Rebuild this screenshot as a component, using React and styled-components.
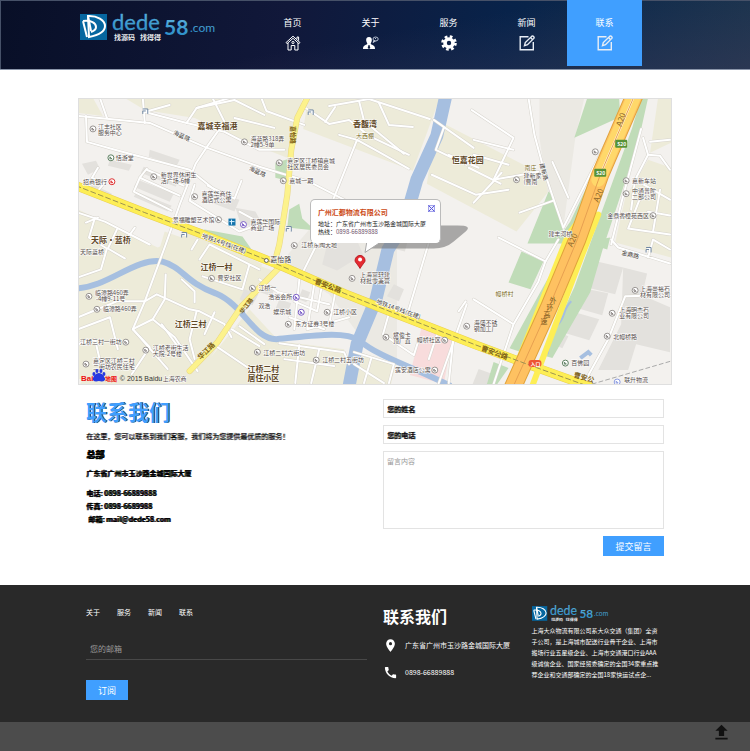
import React from "react";
import styled, { createGlobalStyle } from "styled-components";
import { MdLocationOn, MdCall, MdFileUpload } from "react-icons/md";

const navItems = [
  { name: "首页", icon: "home" },
  { name: "关于", icon: "person" },
  { name: "服务", icon: "gear" },
  { name: "新闻", icon: "edit" },
  { name: "联系", icon: "edit", active: true },
];

const footerLinks = ["关于", "服务", "新闻", "联系"];

const NavIcon = ({ type }) => {
  if (type === "edit") {
    return (
      <svg width="16" height="16" viewBox="0 0 16 16" fill="none" stroke="#e8eef6" strokeWidth="1.4">
        <path d="M9.500 1.700H1.200v13.100h13.100V7" />
        <path d="m5.500 10.700.8-3.200 6.500-6.300q1-.6 1.800.3.900.9.200 1.900l-6.300 6.300z" />
        <path d="m11.500 2.500 2 2" />
      </svg>
    );
  }
  if (type === "home") {
    return (
      <svg width="16" height="16" viewBox="0 0 16 16" fill="none" stroke="#fff">
        <path d="M1 7.6 8 1.2l7 6.4-1 1.1-6-5.4-6 5.4z" />
        <path d="M3 8v7h3.2v-4.5h3.6V15H13V8M12 4V2h1.6v3.6" />
        <circle cx="8" cy="7.5" r="1.1" />
      </svg>
    );
  }
  if (type === "person") {
    return (
      <svg width="16" height="16" viewBox="0 0 16 16" fill="#fff">
        <path d="M6 2c2.2 0 3 1.5 2.8 3.4C8.600 7 8 7.600 7.700 8.300c0 1 1 1.400 2.300 2 1.700.8 2 1.700 2 3.700H0c0-2 .4-2.900 2-3.700 1.400-.6 2.300-1 2.300-2C4 7.600 3.400 7 3.200 5.400 3 3.500 3.800 2 6 2z" />
        <path d="M5.500 10h1l.8 3-1.300 1-1.300-1z" fill="#101d3b" />
        <ellipse cx="12.600" cy="4" rx="2.600" ry="2" fill="none" stroke="#b6bfd0" />
        <path d="m11 5.500-1 2 2.500-1.500M12 4l1-1" stroke="#b6bfd0" />
      </svg>
    );
  }
  return (
    <svg width="16" height="16" viewBox="0 0 16 16" fill="none" stroke="#fff">
      <circle cx="8" cy="8" r="4" strokeWidth="3.600" />
      <circle cx="8" cy="8" r="6.500" strokeWidth="2.600" strokeDasharray="2.700 2.405" />
    </svg>
  );
};

const Logo = () => (
  <LogoSvg viewBox="0 0 140 30" role="img" aria-label="dede58.com">
    <defs>
      <linearGradient id="logoBlue" x1="0" y1="0" x2="0" y2="1">
        <stop offset="0" stopColor="#64b8e2" />
        <stop offset="1" stopColor="#2388c4" />
      </linearGradient>
    </defs>
    <rect y="2" width="27" height="26" fill="#06669f" />
    <g fill="none" stroke="#fff" strokeWidth="2">
      <path d="M8 4c9-.5 17 4 17 10 0 5-6 9-16 11z" />
      <path d="m3 9 4 16M3 9c8-1 13 2 13 6 0 2.500-2 4-5 5" />
      <path d="M8 4 11 19" />
    </g>
    <g fill="url(#logoBlue)">
      <text x="32" y="18" fontSize="22" fontFamily="Lato" stroke="#4aa3d6" strokeWidth="0.3">dede</text>
      <text x="84" y="23" fontSize="21" fontFamily="Lato" fontWeight="bold">58</text>
      <text x="110" y="20" fontSize="12" fontFamily="Lato">.com</text>
    </g>
    <g fill="#e8e8ec" fontSize="7" fontWeight="bold">
      <text x="34" y="28">找源码</text>
      <text x="60" y="28">找得得</text>
    </g>
  </LogoSvg>
);

// white streets, drawn once as a casing and once as the surface
const streets = [
  "M78 116 L150 123 L205 147 L260 167 L310 182 L345 200",
  "M86 116 L87 142 L115 150 L190 170 L215 190",
  "M100 98 L107 118 M143 98 L145 123 M145 112 L187 123 L197 108 L230 98",
  "M145 112 L170 105 M187 123 L225 132 L260 150 L285 150",
  "M213 98 L225 122 L208 146 L196 164 L180 205 L166 245 L145 302 L133 330",
  "M197 108 L235 100 L265 115 M235 118 L275 128 M262 98 L267 111 L305 125",
  "M140 178 L134 192 L172 211 M140 178 L180 196 M147 170 L184 186",
  "M140 178 L147 169 M195 185 L190 201 L240 232 L262 224 L240 212",
  "M98 168 L92 178 L104 184 L98 191 M208 186 L235 199 L242 181",
  "M95 218 L89 238 L107 249 L101 270 L78 278 M78 213 L105 222 L150 245",
  "M117 230 L108 249 L125 259 M125 242 L135 228 M86 223 L98 218",
  "M305 107 L330 124 L350 120 L370 136 L410 155 M330 106 L370 99 L431 119",
  "M326 122 L336 107 M360 101 L365 121 L405 154 M380 103 L390 125 L414 127",
  "M340 135 L358 140 L378 151 L410 169 M358 140 L332 205",
  "M435 120 L475 148 M445 128 L437 150 L468 165 M450 155 L480 168",
  "M433 175 L477 195 L510 190 M473 110 L515 138 L495 180 L540 172",
  "M475 140 L515 150 M475 155 L510 165 M470 168 L502 184",
  "M530 98 L536 135 L546 172 L557 205 L565 228 M475 203 L503 173",
  "M554 162 L570 198 M521 213 L555 201 M565 228 L617 125 L628 122",
  "M643 129 L624 200 L613 245 M645 138 L650 155 L637 180 L633 210",
  "M650 155 L662 156 L672 170 M652 142 L672 140 M637 180 L672 200",
  "M643 196 L630 229 L672 235 M650 212 L672 216 M662 190 L655 232",
  "M613 240 L620 248 L672 264 M650 258 L655 240 L672 250",
  "M500 238 L547 262 L540 282 L515 325 L475 300 M515 325 L495 385",
  "M547 262 L560 240 M672 296 L627 297 L610 340 L588 380",
  "M78 318 L100 309 L117 302 L145 302 L157 295 L190 310 L200 312 L225 325 L232 338",
  "M166 275 L165 300 L153 320 L175 338 L198 372 M182 280 L195 292 L195 303",
  "M78 330 L110 318 L118 350 M78 345 L95 340 L102 370 M133 330 L150 348 L132 375",
  "M133 330 L168 370 M153 320 L133 330 M162 325 L180 350 M197 312 L190 340 L195 360",
  "M200 260 L210 245 L260 270 M192 250 L198 240 M203 277 L243 290 L250 265",
  "M215 313 L205 335 M232 330 L260 347 M240 327 L265 345 M218 348 L258 375",
  "M260 280 L279 293 L330 305 M300 281 L295 330 M315 285 L308 330 L350 318",
  "M322 290 L318 312 L295 302 M336 294 L330 325 M290 318 L325 330",
  "M280 344 L345 353 L350 365 M300 346 L296 384 M320 350 L312 384 M285 360 L335 367",
  "M355 353 L395 365 L390 384 M355 365 L385 384 M372 360 L365 384",
  "M390 314 L384 335 L415 356 L420 340 M440 330 L430 360 M455 335 L450 384",
  "M460 312 L467 302 M468 305 L440 384 M430 243 L410 310 M320 240 L300 280",
];

const blocks = [
  "M138 180l36 14-4 8-36-15zM144 167l35 14-3 6-35-14zM137 192l35 14-4 6-34-15z",
  "M210 190l30 10-5 12-28-11zM236 208l20 4 10 18-25-6zM150 150l30 10-3 6-28-9z",
  "M92 184l20 10-3 8-20-9zM82 164l14-3 4 8-12 6zM110 160l22 5-3 6-21-5z",
  "M262 282l14 6-4 9-14-5zM280 300l12 4-4 10-12-4zM303 290l8 3-4 10-8-3z",
  "M245 290l14 5-6 11-13-6zM328 245l30-4 6 14-26 16-15-6z",
  "M590 260l35 8-8 27-38-9zM625 268l24 6-5 22 28 12v45l-34-8-8 26h-30l23-46z",
  "M580 288l30 6-6 22-32-9zM573 312l28 8-10 21-27-8zM560 333l10 4-6 12-9-4z",
  "M398 235l12 2-4 15-12-3zM395 285l10 5-5 12-12-5zM480 370l14 5v10h-20z",
];

// [x, y, text, size]
const places = [
  [98, 129, "江丰社区", 6], [98, 135, "服务中心", 6],
  [251, 141, "海蓝路318弄", 6], [251, 147, "2幢5-9单", 6],
  [116, 160, "恬游堂", 6], [83, 184, "招商银行", 6],
  [161, 177, "新世界休闲生", 6], [161, 183, "活广场-6幢", 6],
  [202, 196, "嘉莲华商住", 6], [202, 202, "酒店式公寓", 6],
  [173, 222, "景福雕塑艺术馆", 6], [251, 224, "嘉莲华国际", 6], [251, 230, "商业广场", 6],
  [288, 163, "嘉定区江桥镇嘉城", 6], [288, 169, "社区居民委员会", 6],
  [290, 183, "嘉城一期", 6], [302, 248, "江桥东陶天地", 6],
  [525, 178, "建新家", 6], [525, 184, "(曹南", 6],
  [634, 183, "嘉新车站", 6], [634, 193, "中通普陀", 6], [634, 199, "二部公司", 6],
  [609, 218, "金鼎香樟苑西区", 6], [550, 236, "建丰河桥", 6],
  [80, 255, "天际蓝桥", 6], [218, 281, "曹安社区", 6],
  [95, 296, "临潭路460弄", 6], [96, 302, "-4幢9-11号", 6], [103, 312, "临潭路460弄", 6],
  [80, 345, "江桥三村一街坊", 6], [153, 351, "江桥老街生活", 6], [153, 357, "大院-2号楼", 6],
  [93, 364, "嘉定区江桥三村", 6], [93, 370, "二街坊农民住宅", 6],
  [259, 291, "江桥一", 6], [269, 300, "浩浴会所", 6], [259, 309, "双浩", 6],
  [274, 315, "娱乐城", 6], [334, 315, "江桥小区", 6], [296, 327, "东方证券3号楼", 6],
  [264, 356, "江桥二村六街坊", 6], [323, 363, "江桥二村五街坊", 6],
  [361, 278, "上海富轩建", 6], [361, 284, "材批零兼营", 6],
  [394, 338, "斌俊卡", 6], [394, 344, "顶厂直", 6], [418, 343, "幔桥社区", 6],
  [396, 373, "莲安酒店公寓", 6], [475, 326, "海盛不锈", 6], [475, 332, "钢加工厂", 6],
  [642, 292, "上海豪裕石", 6], [642, 298, "材有限公司", 6],
  [621, 313, "上海明杰石", 6], [621, 319, "业有限公司", 6],
  [615, 340, "北幔桥路", 6], [573, 366, "百佛园", 6], [626, 383, "联升物流", 6],
  [163, 382, "上海农商", 6],
];

const areas = [
  [198, 129, "嘉城幸福港", 8], [354, 127, "香馥湾", 8], [453, 163, "恒嘉花园", 8],
  [91, 243, "天际·蓝桥", 8], [201, 271, "江桥一村", 8], [175, 328, "江桥三村", 8],
  [248, 373, "江桥二村", 8], [248, 382, "居住小区", 8],
];

const roadNames = [
  [173, 134, "海蓝路", 6, 25], [249, 170, "海蓝路", 6, 25],
  [202, 238, "地铁14号线(在建)", 6, 20], [271, 263, "嘉怡路", 7, 0],
  [377, 304, "地铁14号线(在建)", 6, 20],
  [541, 164, "建新路", 6, 75], [623, 255, "金鼎路", 6, 14],
];

const mainRoadNames = [
  [292, 126, "嘉怡路", 6, 90], [315, 284, "曹安公路", 7, 21],
  [243, 315, "华江路", 6, -52], [201, 361, "华江路", 7, -45],
  [482, 351, "曹安公路", 7, 20], [575, 378, "曹安公", 7, 16],
];

const markers = [
  [93, 129], [245, 142], [111, 158, "#5d8061"], [112, 182, "#d33"], [154, 177],
  [195, 197], [219, 220], [244, 225, "#7659c5"], [280, 163], [284, 181],
  [295, 246], [518, 180], [597, 152], [628, 181], [628, 194], [655, 216],
  [212, 279], [89, 297], [97, 310], [126, 343], [146, 351], [86, 365],
  [253, 289], [297, 298, "#7659c5"], [302, 313, "#7659c5"], [328, 313],
  [289, 325], [258, 353], [317, 361], [353, 279], [387, 338], [446, 341], [436, 371],
  [468, 327], [637, 291], [614, 314], [609, 337], [567, 364, "#5d8061"], [619, 383, "#8c9be0"],
];

const river =
  "M76 289 C108 288 135 258 162 262 C184 268 184 282 216 294 C245 306 254 340 277 340 C310 337 345 331 360 341 C380 358 410 366 452 387";
const mainRoad = "M76 186 L145 213 L201 234 L276 264 L345 294 L398 315 L475 345 L531 366 L595 389";
const highway = "M637 94 L602 175 L579 240 L551 307 L514 389";

const MapDrawing = () => (
  <MapSvg viewBox="79 99 594 286" aria-label="公司位置地图">
    <rect x="79" y="99" width="594" height="286" fill="#f3f1ee" />
    <g fill="#edebd9">
      <path d="M78 98h15l10 18-25-3zM125 98h178l-10 62-36-14-62-28-50-8z" />
      <path d="M78 210l80 38 40-18 65 35-80 115H78z" />
      <path d="M165 232l90 32 20 8-30 32-50 81H80l75-120zM190 385l60-75 30 32 65 8 5 35z" />
      <path d="M309 98h132l-27 73-110-42zM438 120l120 62-40 50-90-48z" />
      <path d="M660 98h13v45l-21 10zM650 160l23 8v90l-56-15 10-45zM352 350l45 15-5 20h-45z" />
    </g>
    <path d="M541 98h45l-9 40-12 90-15-30-9-60zM310 230l88 15v120l-35-25-33-45-50-30z" fill="#ebe9e3" />
    <g fill="#e3e1dd">
      {blocks.map((d) => (
        <path d={d} key={d} />
      ))}
    </g>
    <g fill="#c0dcb8">
      <path d="M589 98h32l1 19-46 21zM643 98h7l-10 45-35 105-13 45-38 66-10-3 32-68 58-160z" />
      <path d="M617 127l-45 95-7 10-12-38-3-2-21 52h40l-25 45-33 60 12 4 50-110 30-65zM523 252l22 10-13 28-22-7z" />
      <path d="M495 363l15 6-12 17h-10zM290 210l10-6 3 15 13 12-28-3zM276 163l14-4-2 22-12-3z" />
      <path d="M205 230l38 7 12 17-16-4-40-15zM600 240l12-2-3 12-16-5z" />
    </g>
    <path d="M424 323l30 12-9 50-34-9z" fill="#f8dcdc" />
    <g fill="none" stroke="#a6bfe0">
      <path d={river} strokeWidth="6" />
      <path d="M447 96 L438 136 L418 180 L405 225 L389 250 L377 300 L358 345 L350 387" strokeWidth="13" />
      <path d="M573 302 C564 310 568 318 558 327 C550 333 552 346 549 355" strokeWidth="2" />
      <path d="M582 359l8-6 3 3" strokeWidth="4" />
    </g>
    <g fill="none" strokeLinejoin="round" strokeLinecap="round">
      <g stroke="#d7d4cd" strokeWidth="3">
        {streets.map((d) => (
          <path d={d} key={d} />
        ))}
      </g>
      <g stroke="#fff" strokeWidth="2">
        {streets.map((d) => (
          <path d={d} key={d} />
        ))}
      </g>
      {[["#e8d684", 6], ["#fcf28c", 5]].map(([color, width]) => (
        <g stroke={color} strokeWidth={width} key={color}>
          <path d="M309 96 L298 118 L292 150 L288 195 L280 245 L275 264" />
          <path d="M279 269 L242 307 L218 343 L190 372" />
        </g>
      ))}
      <path d={mainRoad} stroke="#e9cf4f" strokeWidth="9" />
      <path d={mainRoad} stroke="#fdee55" strokeWidth="8" />
      <path d="M597 200 L570 235 L509 389 M600 215 L584 255 L533 389" stroke="#fdee55" strokeWidth="6" />
      <path d={highway} stroke="#e0a33b" strokeWidth="18" />
      <path d={highway} stroke="#fec161" strokeWidth="16" />
      <path d="M637 94 L600 180" stroke="#ffd86a" strokeWidth="14" />
      <path d="M637 94 L602 175" stroke="#fff5dd" strokeWidth="2" />
      <path d={highway} stroke="#e7a050" strokeWidth="1" />
      <path d={mainRoad} stroke="#9c9250" strokeWidth="1" strokeDasharray="5 3" />
      <path d="M594 385 L673 362" stroke="#aaa" strokeDasharray="4 3" />
    </g>
    {markers.map(([x, y, color]) => (
      <g key={`${x}-${y}`}>
        <circle cx={x} cy={y} r="3" fill="#fff" stroke={color || "#989491"} />
        <path d={`M${x - 1} ${y + 1}v-2l2 2h-2`} stroke={color || "#857e7c"} fill="none" />
      </g>
    ))}
    <g fill="#fff" stroke="#6f87a2">
      {[[143, 109], [309, 110], [182, 233], [287, 227], [648, 248]].map(([x, y]) => (
        <path d={`M${x} ${y}h5v5m-5 0v-3h3`} key={x} />
      ))}
    </g>
    <rect x="229" y="219" width="7" height="7" fill="#1676ae" />
    <path d="M230 222h5M232 220v5" stroke="#d9f1ff" />
    <g stroke="#fff" strokeWidth="1" paintOrder="stroke">
      <g fill="#544b48">
        {places.map(([x, y, text, size]) => (
          <text x={x} y={y} fontSize={size} key={`${x}-${y}`}>{text}</text>
        ))}
      </g>
      <g fill="#5f4827" fontWeight="bold">
        {areas.map(([x, y, text, size]) => (
          <text x={x} y={y} fontSize={size} key={text}>{text}</text>
        ))}
      </g>
      <g fill="#3f3b36">
        {roadNames.map(([x, y, text, size, angle]) => (
          <text fontSize={size} transform={`translate(${x} ${y}) rotate(${angle})`} key={`${x}-${y}`}>
            {text}
          </text>
        ))}
      </g>
      <g fill="#7a6a1c" fontSize="6">
        <text x="357" y="138">大西棚</text>
        <text x="526" y="170">南庄</text>
        <text x="497" y="297">幔桥村</text>
      </g>
    </g>
    <g fill="#7d5f14" fontWeight="bold">
      {mainRoadNames.map(([x, y, text, size, angle]) => (
        <text fontSize={size} transform={`translate(${x} ${y}) rotate(${angle})`} key={`${x}-${y}`}>
          {text}
        </text>
      ))}
    </g>
    <circle cx="267" cy="261" r="2" fill="#fff" stroke="#625d4d" />
    <g fill="#8b652a" fontSize="8">
      <text transform="translate(623 127) rotate(-70)">A20</text>
      <text transform="translate(600 203) rotate(-66)">A20</text>
      <text transform="translate(574 248) rotate(-66)">A20</text>
    </g>
    <g fill="#7d5a22" fontSize="7">
      <text x="551" y="304">外</text>
      <text x="548" y="311">环</text>
      <text x="545" y="318">高</text>
      <text x="542" y="325">速</text>
    </g>
    <rect x="617" y="140" width="12" height="8" rx="1" fill="#579237" />
    <rect x="596" y="169" width="12" height="8" rx="1" fill="#579237" />
    <rect x="530" y="361" width="13" height="7" rx="3" fill="#ee5333" />
    <g fill="#fff" fontSize="5" fontWeight="bold">
      <text x="619" y="146">S20</text>
      <text x="598" y="175">S20</text>
      <text x="532" y="367">入口</text>
    </g>
    <g fontFamily="Liberation Sans" fontWeight="bold">
      <text x="81" y="382" fill="#e11" fontSize="8">Bai</text>
      <text x="105" y="382" fill="#e11" fontSize="6" fontFamily="Noto Sans CJK SC">地图</text>
      <text x="120" y="382" fill="#333" fontSize="7" fontWeight="normal">© 2015 Baidu</text>
    </g>
    <g fill="#2638e0">
      <path d="M99 374c3 0 5 3 6 5 1 3-2 4-6 3-4 1-7 0-6-3 1-2 3-5 6-5z" />
      <ellipse cx="94" cy="375" rx="1.500" ry="2" />
      <ellipse cx="97" cy="372" rx="1.500" ry="2" />
      <ellipse cx="101" cy="372" rx="1.500" ry="2" />
      <ellipse cx="104" cy="375" rx="1.500" ry="2" />
    </g>
    <path d="M438 226h21q15 0 8 6l-12 10q-8 7-20 7h-65l8-7h60z" fill="#777" opacity="0.600" />
    <path d="M368 241 366 253 384 241z" fill="#fff" stroke="#aaa" />
    <path d="M361 269c-3-5-5-6-5-8a5 5 0 0 1 10 0c0 2-2 3-5 8z" fill="#e52b31" stroke="#b71922" />
    <circle cx="361" cy="260" r="2" fill="#fff" />
  </MapSvg>
);

const App = () => {
  const [showPopup, setShowPopup] = React.useState(true);

  return (
    <>
      <GlobalStyle />
      <Header>
        <Brand href="#">
          <Logo />
        </Brand>
        <Nav>
          {navItems.map((item) => (
            <NavLink href="#" key={item.name} $active={item.active}>
              {item.name}
              <NavIcon type={item.icon} />
            </NavLink>
          ))}
        </Nav>
      </Header>

      <Main>
        <MapBox>
          <MapDrawing />
          {showPopup && (
            <Popup>
              <Close type="button" aria-label="关闭" onClick={() => setShowPopup(false)}>
                <svg width="7" height="7" viewBox="0 0 7 7">
                  <path d="M0 0h7v7H0zM1 1l5 5M6 1 1 6" fill="#eef" stroke="#5a5ad8" />
                </svg>
              </Close>
              <PopupTitle>广州汇都物流有限公司</PopupTitle>
              <p>地址：广东省广州市玉沙路金城国际大厦</p>
              <p>
                热线：<Hotline>0898-66889888</Hotline>
              </p>
            </Popup>
          )}
        </MapBox>

        <Contact>
          <Info>
            <Title>联系我们</Title>
            <Intro>在这里，您可以联系到我们客服，我们将为您提供最优质的服务！</Intro>
            <Branch>总部</Branch>
            <Address>广东省广州市玉沙路金城国际大厦</Address>
            <Line>电话: 0898-66889888</Line>
            <Line>传真: 0898-6689988</Line>
            <Line $indent>邮箱: mail@dede58.com</Line>
          </Info>
          <Form onSubmit={(e) => e.preventDefault()}>
            <Input aria-label="您的姓名" placeholder="您的姓名" />
            <Input aria-label="您的电话" placeholder="您的电话" />
            <TextArea aria-label="留言内容" placeholder="留言内容" />
            <Submit type="submit">提交留言</Submit>
          </Form>
        </Contact>
      </Main>

      <Footer>
        <Subscribe onSubmit={(e) => e.preventDefault()}>
          <FooterNav>
            {footerLinks.map((name) => (
              <a href="#" key={name}>{name}</a>
            ))}
          </FooterNav>
          <Email type="email" aria-label="您的邮箱" placeholder="您的邮箱" />
          <SubscribeButton type="submit">订阅</SubscribeButton>
        </Subscribe>
        <Company>
          <div>
            <FooterTitle>联系我们</FooterTitle>
            <Detail>
              <MdLocationOn size={15} />
              <span>广东省广州市玉沙路金城国际大厦</span>
            </Detail>
            <Detail>
              <MdCall size={15} />
              <span>0898-66889888</span>
            </Detail>
          </div>
          <div>
            <FooterLogo>
              <Logo />
            </FooterLogo>
            <About>
              上海大众物流有限公司系大众交通（集团）全资
              <br />
              子公司，是上海城市配送行业骨干企业、上海市
              <br />
              搬场行业五星级企业、上海市交通港口行业AAA
              <br />
              级诚信企业、国家经贸委确定的全国34家重点推
              <br />
              荐企业和交通部确定的全国18家快运试点企...
            </About>
          </div>
        </Company>
      </Footer>
      <BottomBar>
        <TopButton
          type="button"
          aria-label="返回顶部"
          onClick={() => window.scrollTo({ top: 0, behavior: "smooth" })}
        >
          <MdFileUpload size={21} />
        </TopButton>
      </BottomBar>
    </>
  );
};

export default App;

const GlobalStyle = createGlobalStyle`
  * {
    box-sizing: border-box;
  }
  body {
    margin: 0;
    background: #fff;
    font-family: "Noto Sans CJK SC", "Noto Sans", sans-serif;
    font-size: 7px;
  }
  p, h1, h2 {
    margin: 0;
  }
  a {
    color: inherit;
    text-decoration: none;
  }
  input, textarea, button {
    font-family: inherit;
    border-radius: 0;
    outline: none;
  }
`;

const Header = styled.header`
  display: flex;
  justify-content: space-between;
  height: 70px;
  padding: 0 108px 0 80px;
  border-bottom: 1px solid #8b96aa;
  box-shadow: inset 1px 1px 0 #465168;
  background:
    linear-gradient(170deg, transparent 50%, rgba(62, 59, 88, 0.5)),
    linear-gradient(100deg, #080f27, #11183a 38%, #08234a 67%, #17334d);
`;

const Brand = styled.a`
  width: 140px;
  padding-top: 12px;
`;

const LogoSvg = styled.svg`
  display: block;
  width: 100%;
  height: auto;
`;

const Nav = styled.nav`
  display: flex;
  gap: 3px;
`;

const NavLink = styled.a`
  display: flex;
  flex-direction: column;
  align-items: center;
  gap: 6px;
  width: 75px;
  height: 66px;
  padding-top: 16px;
  color: #fff;
  font-size: 9px;
  line-height: 13px;
  background: ${({ $active }) => ($active ? "#409fff" : "transparent")};
`;

const Main = styled.main`
  padding: 28px 78px 29px;
`;

const MapBox = styled.section`
  position: relative;
  border: 1px solid #dfdfdf;
`;

const MapSvg = styled.svg`
  display: block;
  width: 100%;
  height: auto;
`;

const Popup = styled.div`
  position: absolute;
  left: 39%;
  top: 35%;
  width: 131px;
  height: 44px;
  padding: 8px 7px;
  border: 1px solid #bbb;
  border-bottom-color: #fff;
  border-radius: 5px;
  background: #fff;
  color: #222;
  font-size: 6px;
  line-height: 8px;
  white-space: nowrap;
`;

const PopupTitle = styled.h2`
  margin-bottom: 3px;
  color: #cc4b16;
  font-size: 7px;
  line-height: 9px;
`;

const Hotline = styled.span`
  color: #6f536b;
`;

const Close = styled.button`
  position: absolute;
  top: 5px;
  right: 5px;
  display: flex;
  padding: 0;
  border: none;
  background: none;
  cursor: pointer;
`;

const Contact = styled.section`
  display: grid;
  grid-template-columns: 1fr 1fr;
  gap: 16px;
  padding: 14px 8px 0;
`;

const Info = styled.div`
  color: #000;
`;

const Title = styled.h1`
  color: #409fff;
  font-size: 21px;
  line-height: 24px;
  text-shadow: 1px 0 #203a58;
`;

const Intro = styled.p`
  margin-top: 7px;
  line-height: 12px;
  text-shadow: 1px 0 #444;
`;

const Branch = styled.p`
  margin-top: 6px;
  font-size: 9px;
  font-weight: 900;
  line-height: 13px;
  text-shadow: 1px 0 #000;
`;

const Address = styled.p`
  margin: 6px 0 8px;
  font-weight: bold;
  line-height: 12px;
  text-shadow: 1px 0 #000;
`;

const Line = styled.p`
  padding-left: ${({ $indent }) => ($indent ? "2px" : "0")};
  font-weight: bold;
  line-height: 13px;
  text-shadow: 1px 0 #000;
`;

const Form = styled.form`
  display: flex;
  flex-direction: column;
  gap: 7px;
`;

const Input = styled.input`
  width: 100%;
  height: 19px;
  padding: 0 3px;
  border: 1px solid #e3e3e3;
  font-size: 7px;

  &::placeholder {
    color: #111;
    font-weight: bold;
    text-shadow: 1px 0 #555;
  }
`;

const TextArea = styled.textarea`
  width: 100%;
  height: 78px;
  padding: 4px 3px;
  border: 1px solid #e3e3e3;
  font-size: 7px;
  resize: none;

  &::placeholder {
    color: #999;
  }
`;

const Button = styled.button`
  height: 20px;
  padding: 0;
  border: none;
  background: #409fff;
  color: #fff;
  font-size: 9px;
  cursor: pointer;
`;

const Submit = styled(Button)`
  align-self: flex-end;
  width: 61px;
`;

const Footer = styled.footer`
  display: grid;
  grid-template-columns: 1fr 1fr;
  gap: 16px;
  min-height: 137px;
  padding: 20px 86px;
  background: #292929;
  color: #fff;
`;

const Subscribe = styled.form`
  display: flex;
  flex-direction: column;
  align-items: flex-start;
`;

const FooterNav = styled.nav`
  display: flex;
  gap: 17px;
  line-height: 14px;
`;

const Email = styled.input`
  width: 100%;
  height: 22px;
  margin: 19px 0 20px;
  padding: 0 4px;
  border: none;
  border-bottom: 1px solid #484848;
  background: transparent;
  color: #fff;
  font-size: 8px;

  &::placeholder {
    color: #999;
  }
`;

const SubscribeButton = styled(Button)`
  width: 42px;
`;

const Company = styled.div`
  display: grid;
  grid-template-columns: 1fr 1fr;
  gap: 16px;
`;

const FooterTitle = styled.h2`
  margin-bottom: 8px;
  font-size: 16px;
  line-height: 22px;
`;

const Detail = styled.p`
  display: flex;
  align-items: center;
  gap: 7px;
  height: 20px;
  margin-bottom: 7px;
  white-space: nowrap;

  svg {
    flex: none;
  }
`;

const FooterLogo = styled.div`
  width: 79px;
`;

const About = styled.p`
  margin-top: 3px;
  font-size: 6px;
  line-height: 11px;
  white-space: nowrap;
`;

const BottomBar = styled.div`
  display: flex;
  justify-content: flex-end;
  align-items: flex-start;
  height: 29px;
  padding-right: 18px;
  background: #4c4c4c;
`;

const TopButton = styled.button`
  display: flex;
  padding: 0;
  border: none;
  background: none;
  color: #111;
  cursor: pointer;
`;
